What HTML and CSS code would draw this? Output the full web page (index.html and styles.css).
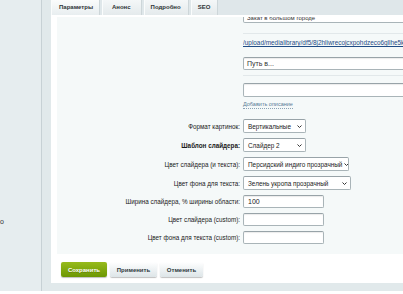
FILE: index.html
```html
<!DOCTYPE html>
<html>
  <head>
    <title>Параметры слайдера</title>
    <link rel="stylesheet" href="styles.css">
  </head>
  <body>
    <div class="layout">
      <!-- Левое меню (свёрнуто) -->
      <aside class="sidebar">
        <div class="menu-item">о</div>
      </aside>

      <main class="main">
        <div class="tabs">
          <div class="tab tab-active">Параметры</div>
          <div class="tab tab-wide">Анонс</div>
          <div class="tab">Подробно</div>
          <div class="tab">SEO</div>
        </div>

        <div class="panel">
          <div class="content">
            <!-- Картинка -->
            <div class="form-row row-first">
              <div></div>
              <div class="input input-wide input-top">Закат в большом городе</div>
            </div>
            <div class="form-row row-sep">
              <div></div>
              <div class="sep"></div>
            </div>
            <div class="form-row row-link">
              <div></div>
              <a class="file-link" href="#">/upload/medialibrary/df5/8j2hliwrecojcxpohdzeco6gllhe5kvb.jpg</a>
            </div>
            <div class="form-row row-path">
              <div></div>
              <div class="input input-wide input-path">Путь в...</div>
            </div>
            <div class="form-row row-sep2">
              <div></div>
              <div class="sep"></div>
            </div>
            <div class="form-row row-empty">
              <div></div>
              <div class="input input-wide"></div>
            </div>
            <div class="form-row row-desc">
              <div></div>
              <a class="desc-link" href="#">Добавить описание</a>
            </div>

            <!-- Настройки слайдера -->
            <div class="form-row row-field">
              <label>Формат картинок:</label>
              <div class="select select-sm">Вертикальные <svg class="chev" width="5" height="3" viewBox="0 0 5 3"><polyline points="0.5,0.5 2.5,2.5 4.5,0.5" /></svg></div>
            </div>
            <div class="form-row row-field">
              <label class="bold">Шаблон слайдера:</label>
              <div class="select select-sm">Слайдер 2 <svg class="chev" width="5" height="3" viewBox="0 0 5 3"><polyline points="0.5,0.5 2.5,2.5 4.5,0.5" /></svg></div>
            </div>
            <div class="form-row row-field">
              <label>Цвет слайдера (и текста):</label>
              <div class="select select-md">Персидский индиго прозрачный <svg class="chev" width="5" height="3" viewBox="0 0 5 3"><polyline points="0.5,0.5 2.5,2.5 4.5,0.5" /></svg></div>
            </div>
            <div class="form-row row-field">
              <label>Цвет фона для текста:</label>
              <div class="select select-lg">Зелень укропа прозрачный <svg class="chev" width="5" height="3" viewBox="0 0 5 3"><polyline points="0.5,0.5 2.5,2.5 4.5,0.5" /></svg></div>
            </div>
            <div class="form-row row-field">
              <label>Ширина слайдера, % ширины области:</label>
              <div class="input input-short">100</div>
            </div>
            <div class="form-row row-field">
              <label>Цвет слайдера (custom):</label>
              <div class="input input-short"></div>
            </div>
            <div class="form-row row-field">
              <label>Цвет фона для текста (custom):</label>
              <div class="input input-short"></div>
            </div>
          </div>

          <div class="buttons">
            <button class="btn btn-save">Сохранить</button>
            <button class="btn btn-apply">Применить</button>
            <button class="btn btn-cancel">Отменить</button>
          </div>
        </div>
      </main>
    </div>
  </body>
</html>
```

FILE: styles.css
```css
body {
  margin: 0;
  background: #fff;
  font-family: "Liberation Sans", Arial, sans-serif;
  font-size: 6px;
  color: #000;
}
.layout {
  display: flex;
  height: 291px;
  background: #e1e9eb;
  overflow: hidden;
}
.sidebar {
  width: 41px;
  flex-shrink: 0;
  background: #e6edef;
  border-right: 1px solid #c7d1d5;
  overflow: hidden;
}
.menu-item {
  margin-top: 218px;
  line-height: 8px;
  font-size: 7px;
  color: #333;
}
.main {
  flex: 1;
  padding-left: 9px;
  overflow: hidden;
}
.tabs {
  display: flex;
  gap: 2px;
  height: 15px;
  background: #dfe7ea;
}
.tab {
  padding: 0 7px;
  line-height: 15px;
  font-weight: bold;
  color: #2e3436;
  background: linear-gradient(#f4f7f8, #e4eaec);
  border-right: 1px solid #cdd6d9;
  box-shadow: inset 1px 0 0 #fafcfc;
}
.tab-active {
  padding-left: 8px;
  width: 33px;
  background: linear-gradient(#fbfcfc, #e8eef0);
}
.tab-wide {
  padding: 0 10px;
}
.panel {
  width: 420px;
  background: #fff;
  padding: 2px 0 6px 6px;
}
.content {
  height: 237px;
  background: #f5f9f9;
  overflow: hidden;
}
.form-row {
  display: grid;
  grid-template-columns: 183px 1fr;
  column-gap: 3px;
  align-items: center;
}
.form-row label {
  text-align: right;
  white-space: nowrap;
  font-size: 6.3px;
  color: #1a1a1a;
}
.bold {
  font-weight: bold;
  color: #000;
}
.row-first {
  margin-top: -6px;
}
.row-sep {
  margin-top: 10px;
}
.row-link {
  margin-top: 4px;
}
.row-path {
  margin-top: 9px;
}
.row-sep2 {
  margin-top: 5px;
}
.row-empty {
  margin-top: 7px;
}
.row-desc {
  margin-top: 3px;
}
.row-field {
  margin-top: 5px;
}
.row-desc + .row-field {
  margin-top: 10px;
}
.sep {
  height: 1px;
  background: #e2e8ea;
}
.file-link {
  line-height: 10px;
  font-size: 6.4px;
  color: #1f4c86;
  white-space: nowrap;
  overflow: hidden;
}
.desc-link {
  line-height: 8px;
  font-size: 5.5px;
  color: #5b7c96;
  text-decoration: none;
  border-bottom: 1px dotted #8ba3b5;
  justify-self: start;
}
.input,
.select {
  box-sizing: border-box;
  height: 13px;
  line-height: 11px;
  padding: 0 4px;
  background: #fff;
  border: 1px solid #a9b4b8;
  border-top-color: #98a3a8;
  border-radius: 2px;
  box-shadow: inset 0 1px 1px rgba(0, 0, 0, 0.08);
  font-size: 7px;
  color: #222;
  white-space: nowrap;
  overflow: hidden;
}
.input-wide {
  width: 200px;
  height: 14px;
  line-height: 12px;
  padding-left: 3px;
  color: #333;
}
.input-top {
  height: 12px;
  line-height: 8px;
  padding-top: 2px;
  font-size: 6px;
}
.input-path {
  height: 13px;
  line-height: 11px;
}
.input-short {
  width: 81px;
}
.select {
  display: flex;
  justify-content: space-between;
  align-items: center;
  gap: 2px;
  height: 14px;
  padding-right: 3px;
  box-shadow: none;
  font-size: 6.4px;
}
.select-sm {
  width: 63px;
}
.select-md {
  width: 106px;
}
.select-lg {
  width: 108px;
}
.chev {
  flex-shrink: 0;
}
.chev polyline {
  fill: none;
  stroke: #333;
  stroke-width: 1;
}
.buttons {
  display: flex;
  gap: 3px;
  padding: 8px 0 0 4px;
}
.btn {
  height: 15px;
  padding: 0;
  border: none;
  border-radius: 2px;
  font-family: "Liberation Sans", Arial, sans-serif;
  font-size: 6px;
  font-weight: bold;
  color: #2f3a3e;
  background: linear-gradient(#ffffff, #dde5e8);
  box-shadow: 0 1px 1px rgba(0, 0, 0, 0.25);
}
.btn-save {
  width: 46px;
  color: #fff;
  background: linear-gradient(#97bb1c, #6c9703);
  text-shadow: 0 1px 0 rgba(0, 0, 0, 0.2);
}
.btn-apply {
  width: 47px;
}
.btn-cancel {
  width: 43px;
}
```
